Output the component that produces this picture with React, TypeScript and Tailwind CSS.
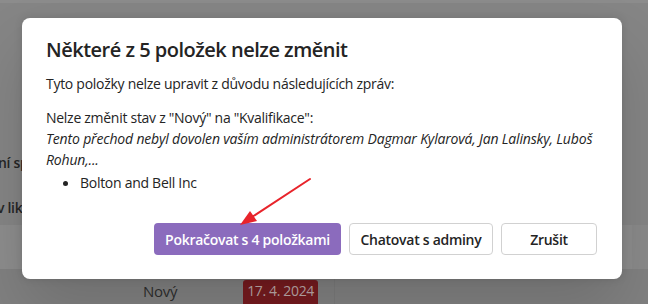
import React from "react";

const font = { fontFamily: '"Open Sans", "Noto Sans", sans-serif' };

export default function App() {
  return (
    <div className="relative w-[648px] h-[304px] overflow-hidden bg-[#858585]" style={font}>
      {/* underlying page (dimmed) */}
      <div className="flex flex-col h-full">
        <div className="h-[3px] bg-[#8c8c8c]" />
        <div className="flex flex-col h-[225px] text-[14px] font-semibold text-[#262626] tracking-[-0.3px]">
          <div className="mt-[148px] w-[22px] overflow-hidden leading-[24px] whitespace-nowrap">
            <span className="-ml-[2px]">ní sp</span>
          </div>
          <div className="mt-[21px] w-[22px] overflow-hidden leading-[24px] whitespace-nowrap">
            <span className="-ml-[3px]">v lik</span>
          </div>
        </div>
        <div className="h-[44px] flex bg-[#8d8d8d]">
          <div className="w-[632px]" />
          <div className="flex-1 bg-[#8a8a8a]" />
        </div>
        <div className="flex-1 flex items-start bg-[#818181]">
          <div className="ml-[143px] mt-[11px] text-[15px] leading-[22px] text-[#2e2e2e] tracking-[-0.3px]">Nový</div>
          <div className="ml-[66px] mt-[11px] h-[24px] px-[4px] rounded-t-[3px] bg-[#761b1f] text-[14px] leading-[22px] text-[#bca9a9] tracking-[-0.35px]">
            17. 4. 2024
          </div>
          <div className="ml-[16px] w-[1px] h-full bg-[#7b7b7b]" />
        </div>
      </div>

      {/* dialog */}
      <div className="absolute left-[22px] top-[18px] w-[600px] h-[261px] rounded-[8px] bg-white shadow-[0_0_8px_rgba(0,0,0,0.12),0_32px_64px_rgba(0,0,0,0.14)] flex flex-col pl-[24px] pr-[25px] pt-[18px] pb-[24px] text-[#242424] tracking-[-0.28px]">
        <div className="text-[20px] leading-[28px] font-semibold tracking-[-0.5px]">Některé z 5 položek nelze změnit</div>
        <div className="mt-[10px] text-[14px] leading-[20px]">Tyto položky nelze upravit z důvodu následujících zpráv:</div>
        <div className="mt-[14px] text-[14px] leading-[20px]">Nelze změnit stav z "Nový" na "Kvalifikace":</div>
        <div className="text-[14px] leading-[21px] italic tracking-[-0.17px]">
          Tento přechod nebyl dovolen vaším administrátorem Dagmar Kylarová, Jan Lalinsky, Luboš Rohun,...
        </div>
        <div className="mt-[3px] flex items-center text-[14px] leading-[20px]">
          <span className="ml-[17px] w-[5px] h-[5px] rounded-full bg-[#242424]" />
          <span className="ml-[12px]">Bolton and Bell Inc</span>
        </div>
        <div className="mt-auto flex justify-end gap-[8px] text-[14px] font-semibold">
          <button className="h-[32px] w-[187px] rounded-[4px] bg-[#8b6bbd] text-white">Pokračovat s 4 položkami</button>
          <button className="h-[32px] w-[144px] rounded-[4px] border border-[#d1d1d1] bg-white text-[#242424]">Chatovat s adminy</button>
          <button className="h-[32px] w-[96px] rounded-[4px] border border-[#d1d1d1] bg-white text-[#242424]">Zrušit</button>
        </div>
      </div>

      {/* annotation arrow */}
      <svg className="absolute left-0 top-0" width="648" height="304" viewBox="0 0 648 304">
        <line x1="310" y1="179" x2="252" y2="217" stroke="#e8242b" strokeWidth="2" strokeLinecap="round" />
        <polygon points="240,225 250,211 257,221" fill="#e8242b" />
      </svg>
    </div>
  );
}
